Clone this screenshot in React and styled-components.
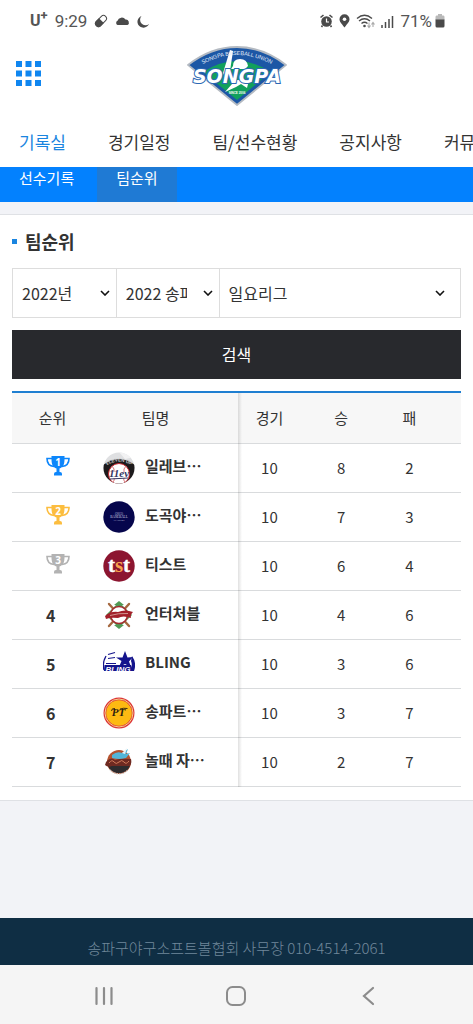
import React from 'react';
import styled, { createGlobalStyle } from 'styled-components';

const menu = [
  { id: 1, title: '기록실', active: true },
  { id: 2, title: '경기일정' },
  { id: 3, title: '팀/선수현황' },
  { id: 4, title: '공지사항' },
  { id: 5, title: '커뮤니티' },
];

const subMenu = [
  { id: 1, title: '선수기록' },
  { id: 2, title: '팀순위', active: true },
];

const filters = [
  { id: 'year', label: '연도', value: '2022년' },
  { id: 'season', label: '대회', value: '2022 송파구 리그' },
  { id: 'league', label: '리그', value: '일요리그', wide: true },
];

const teams = [
  { rank: 1, name: '일레브⋯', games: 10, win: 8, lose: 2, Logo: NineLogo },
  { rank: 2, name: '도곡야⋯', games: 10, win: 7, lose: 3, Logo: AcademyLogo },
  { rank: 3, name: '티스트', games: 10, win: 6, lose: 4, Logo: TstLogo },
  { rank: 4, name: '언터처블', games: 10, win: 4, lose: 6, Logo: UntouchableLogo },
  { rank: 5, name: 'BLING', games: 10, win: 3, lose: 6, Logo: BlingLogo },
  { rank: 6, name: '송파트⋯', games: 10, win: 3, lose: 7, Logo: PtLogo },
  { rank: 7, name: '놀때 자⋯', games: 10, win: 2, lose: 7, Logo: PlayLogo },
];

const trophyColors = { 1: '#0d86fb', 2: '#fcbd3f', 3: '#b3b3b3' };

function NineLogo() {
  return (
    <svg width="32" height="32" viewBox="0 0 32 32" aria-hidden="true">
      <defs>
        <clipPath id="nine"><circle cx="16" cy="16" r="15.5" /></clipPath>
        <path id="nineArc" d="M3 14 Q16 5 29 14" />
      </defs>
      <g clipPath="url(#nine)">
        <rect width="32" height="32" fill="#dfe0e2" />
        <path d="M16 0 L22 7 L32 5 V0 Z" fill="#f2f2f3" />
        <path d="M0 13 Q16 1 32 13 V25 L26 32 H6 L0 25 Z" fill="#1d1a1c" />
        <circle cx="16" cy="22" r="10.5" fill="#fff" stroke="#c8262e" />
        <path d="M9 14 Q12 17 11 20 M23 14 Q20 17 21 20 M10 30 Q12 28 11 26 M22 30 Q20 28 21 26" fill="none" stroke="#d8747a" />
      </g>
      <text fontFamily="Liberation Sans" fontSize="4.5" fontWeight="700" fill="#ccc">
        <textPath href="#nineArc" startOffset="50%" textAnchor="middle">ELEVEN UP</textPath>
      </text>
      <text x="16" y="25" textAnchor="middle" fontFamily="Liberation Serif" fontSize="11" fontStyle="italic" fontWeight="700" fill="#34365f">11ev</text>
      <path d="M7 27 L25 26" stroke="#34365f" />
    </svg>
  );
}

function AcademyLogo() {
  return (
    <svg width="32" height="32" viewBox="0 0 32 32" aria-hidden="true">
      <circle cx="16" cy="16" r="15.7" fill="#06064c" />
      <g fill="#d0d0e2" textAnchor="middle" fontFamily="Liberation Serif">
        <text x="16" y="13.5" fontSize="3">(2015)</text>
        <text x="16" y="17" fontSize="3.4">BASEBALL</text>
        <text x="16" y="20" fontSize="2.4">ACADEMY</text>
      </g>
    </svg>
  );
}

function TstLogo() {
  return (
    <svg width="32" height="32" viewBox="0 0 32 32" aria-hidden="true">
      <circle cx="16" cy="16" r="15.7" fill="#8c1530" />
      <g fontFamily="Liberation Serif" fontWeight="700" textAnchor="middle">
        <text x="8.5" y="22" fontSize="21" fill="#fff" stroke="#fff" strokeWidth=".4">t</text>
        <text x="16" y="22" fontSize="21" fill="#f8a34c">s</text>
        <text x="23.5" y="22" fontSize="21" fill="#fff" stroke="#fff" strokeWidth=".4">t</text>
      </g>
    </svg>
  );
}

function UntouchableLogo() {
  return (
    <svg width="32" height="32" viewBox="0 0 32 32" aria-hidden="true">
      <path d="M16 3 L29 16 L16 29 L3 16 Z" fill="#4f9a55" />
      <path d="M6 5 L26 27 M26 5 L6 27" stroke="#a5683f" strokeWidth="2.400" strokeLinecap="round" />
      <circle cx="16" cy="16" r="8.500" fill="#fff" stroke="#a52a30" strokeWidth="1.600" />
      <path d="M2 17 Q8 12 15 13 Q22 10 30 13 Q27 16 28 19 Q20 16 15 19 Q8 18 3 20 Z" fill="#a3202a" />
      <path d="M7 16.500 Q15 14 25 14.500" stroke="#dcb0a8" strokeWidth=".8" fill="none" />
      <path d="M11 6 H21 L16 2 Z M11 26 H21 L16 30 Z" fill="#4f9a55" />
    </svg>
  );
}

function BlingLogo() {
  return (
    <svg width="32" height="32" viewBox="0 0 32 32" aria-hidden="true">
      <path d="M3 8 Q-1 15 1 22" fill="none" stroke="#14148c" strokeWidth="1.300" />
      <path d="M5 6.500 L12 4.500 M5 10.500 L12 9.500 M3 15.500 H13" fill="none" stroke="#14148c" strokeWidth="1.200" />
      <path d="M22 3 L24.500 9.500 L30 9 L26 13.500 L28 19 L22 16 L16 19 L18.500 13 L13 9.500 L19.500 9.500 Z" fill="#14148c" />
      <path d="M29 8 Q34 15 31 23 H27 Q30 18 28 13 Z" fill="#14148c" />
      <path d="M1.500 17 H28 L30 23 H1 Z" fill="#14148c" />
      <text x="15" y="23.500" textAnchor="middle" fontFamily="Liberation Sans" fontSize="8" fontStyle="italic" fontWeight="700" fill="#fff">BLING</text>
    </svg>
  );
}

function PtLogo() {
  return (
    <svg width="32" height="32" viewBox="0 0 32 32" aria-hidden="true">
      <circle cx="16" cy="16" r="15.500" fill="#dd3538" />
      <circle cx="16" cy="16" r="14" fill="none" stroke="#f6cf8c" />
      <circle cx="16" cy="16" r="12.800" fill="#fdba12" />
      <text x="15.500" y="19" textAnchor="middle" fontFamily="Liberation Serif" fontSize="11" fontStyle="italic" fontWeight="700" fill="#2c2010">PT</text>
      <path d="M8.500 14 Q8.500 11 12 11.500 M17 12 Q20 10.800 24.500 11.500" fill="none" stroke="#2c2010" strokeWidth=".9" />
    </svg>
  );
}

function PlayLogo() {
  return (
    <svg width="32" height="32" viewBox="0 0 32 32" aria-hidden="true">
      <circle cx="16" cy="16" r="12" fill="#b5532f" />
      <path d="M5 20 A12 12 0 0 0 27 20 Z" fill="#2d2b2e" />
      <path d="M7 24 Q16 32 25 24" fill="none" stroke="#d6d3d0" strokeWidth="1.200" strokeDasharray="1.500 1" />
      <path d="M9 9 Q14 5 19 7 L25 3 L23 8 L27 7 L23 12 Q17 14 9 12 Z" fill="#52b5d8" />
      <path d="M19 7 L24 2 L22 8 Z" fill="#e9f3f5" />
      <path d="M3 16 Q8 10 12 14 Q18 12 28 13 Q29 17 27 20 H9 Q5 22 2 19 Z" fill="#6f2a22" />
      <path d="M6 17 Q9 13 11 16 T16 16 T21 16 T26 15" fill="none" stroke="#cf7a5a" />
    </svg>
  );
}

function Trophy({ rank }) {
  const color = trophyColors[rank];
  return (
    <svg width="24" height="20" viewBox="0 0 24 20" role="img" aria-label={`${rank}위`}>
      <path d="M6 2.500 H1 C1 7 3 10 8 10.500 M18 2.500 H23 C23 7 21 10 16 10.500" fill="none" stroke={color} strokeWidth="1.600" />
      <path d="M5.500 0 H18.500 V3 C18.500 8.500 17 11.500 13.500 12.500 V16 H10.500 V12.500 C7 11.500 5.500 8.500 5.500 3 Z" fill={color} />
      <path d="M8 19.500 V18 Q8 16 10 16 H14 Q16 16 16 18 V19.500 Z" fill={color} />
      <text x="12" y="10" textAnchor="middle" fontFamily="Open Sans" fontSize="10" fontWeight="700" fill="#fff">{rank}</text>
    </svg>
  );
}

function UnionLogo() {
  return (
    <svg width="100" height="60" viewBox="0 0 100 60" role="img" aria-label="SONGPA BASEBALL UNION">
      <defs>
        <path id="unionArc" d="M9 22 Q50 -4 91 22" />
      </defs>
      <path d="M1 19 Q24 1 50 1 Q76 1 99 19 L50 59 Z" fill="#1c57a5" stroke="#b4bac2" strokeWidth="1.800" />
      <path d="M16 26 Q50 4 84 26 L50 54 Z" fill="#12a05c" />
      <path d="M43 4 L46 5 L43 25 L38 31 L36 27 Z" fill="#fff" />
      <path d="M46 20 Q46 13 53 13 Q60 13 61 20 L58 23 H44 Z" fill="#fff" />
      <path d="M47 34 H62 L60 42 L54 38 L49 41 L38 46 L45 38 Z" fill="#fff" />
      <text fontFamily="Liberation Sans" fontSize="5.500" fill="#e6effa">
        <textPath href="#unionArc" startOffset="50%" textAnchor="middle">SONGPA BASEBALL UNION</textPath>
      </text>
      <text x="50" y="37" textAnchor="middle" fontFamily="DejaVu Sans" fontSize="19" fontStyle="italic" fontWeight="700" fill="#fff" stroke="#2c68b3" strokeWidth="2" paintOrder="stroke">SONGPA</text>
      <text x="50" y="48" textAnchor="middle" fontFamily="Liberation Sans" fontSize="3" fontWeight="700" fill="#fff">SINCE 2006</text>
    </svg>
  );
}

function StatusBar() {
  return (
    <ContainerStatus>
      <StatusGroup $wide>
        <Carrier>U<sup>+</sup></Carrier>
        <span>9:29</span>
        <svg width="14" height="14" viewBox="0 0 14 14" aria-hidden="true">
          <g transform="rotate(-45 7 7)">
            <rect x="0.500" y="4" width="13" height="6" rx="3" fill="#fff" stroke="#4a4a4a" />
            <path d="M7 4 V10 H3.500 A3 3 0 0 1 3.500 4 Z" fill="#4a4a4a" stroke="#4a4a4a" />
          </g>
        </svg>
        <svg width="15" height="10" viewBox="0 0 15 10" aria-hidden="true">
          <path d="M2.500 9 A2.300 2.300 0 0 1 2.500 4.800 A4.500 4.500 0 0 1 10.500 3.500 A3 3 0 0 1 12.500 9 Z" fill="#4a4a4a" />
        </svg>
        <svg width="13" height="13" viewBox="0 0 13 13" aria-hidden="true">
          <path d="M4.500 1 A6 6 0 1 0 12 9 A5.500 5.500 0 0 1 4.500 1 Z" fill="#4a4a4a" />
        </svg>
      </StatusGroup>
      <StatusGroup>
        <svg width="13" height="14" viewBox="0 0 13 14" aria-hidden="true">
          <path d="M0.500 3.500 L3.500 1 M12.500 3.500 L9.500 1 M2.500 11.500 L1.500 13 M10.500 11.500 L11.500 13" stroke="#4a4a4a" strokeWidth="1.600" />
          <circle cx="6.500" cy="7.500" r="5.300" fill="#4a4a4a" />
          <path d="M6.500 4.500 V8 H9" fill="none" stroke="#fff" strokeWidth="1.200" />
        </svg>
        <svg width="11" height="14" viewBox="0 0 11 14" aria-hidden="true">
          <path d="M5.500 13.500 C2 9 .5 7.500 .5 5.300 A5 5 0 0 1 10.500 5.300 C10.500 7.500 9 9 5.500 13.500 Z" fill="#4a4a4a" />
          <circle cx="5.500" cy="5.300" r="1.800" fill="#fff" />
        </svg>
        <svg width="19" height="15" viewBox="0 0 19 15" aria-hidden="true">
          <path d="M1 4.500 Q8.500 -2 16 4.500 M3 7 Q8.500 2.500 14 7 M5.500 9.500 Q8.500 7 11.500 9.500" fill="none" stroke="#4a4a4a" strokeWidth="1.400" />
          <circle cx="8.500" cy="12" r="1.300" fill="#4a4a4a" />
          <path d="M13 8.500 V13 M11.500 11.500 L13 13.500 L14.500 11.500 M17 13 V8.500 M15.500 10.500 L17 8.500 L18.500 10.500" fill="none" stroke="#aaa" strokeWidth="1.100" />
        </svg>
        <svg width="13" height="13" viewBox="0 0 13 13" aria-hidden="true">
          <path d="M1 10 V13 M4.500 7 V13 M8 4 V13 M11.500 1 V13" stroke="#4a4a4a" strokeWidth="1.500" />
        </svg>
        <Battery>
          <span>71%</span>
          <svg width="10" height="14" viewBox="0 0 10 14" aria-hidden="true">
            <path d="M3 0 H7 V1.500 H8.500 Q9.500 1.500 9.500 3 V6 H.5 V3 Q.5 1.500 1.500 1.500 H3 Z" fill="#b9b9b9" />
            <path d="M.5 5.500 H9.500 V12 Q9.500 13.500 8 13.500 H2 Q.5 13.500 .5 12 Z" fill="#4a4a4a" />
          </svg>
        </Battery>
      </StatusGroup>
    </ContainerStatus>
  );
}

function Header() {
  return (
    <header>
      <TopBar>
        <MenuButton type="button" aria-label="전체 메뉴">
          <svg width="25" height="25" viewBox="0 0 25 25" aria-hidden="true">
            {[0, 9.5, 19].map((y) =>
              [0, 9.5, 19].map((x) => (
                <rect key={`${x}-${y}`} x={x} y={y} width="6" height="6" fill="#0f86f0" />
              ))
            )}
          </svg>
        </MenuButton>
        <LogoLink href="#home"><UnionLogo /></LogoLink>
      </TopBar>
      <MainNav>
        {menu.map(({ id, title, active }) => (
          <NavLink key={id} href="#menu" $active={active}>{title}</NavLink>
        ))}
      </MainNav>
      <SubNav>
        {subMenu.map(({ id, title, active }) => (
          <SubLink key={id} href="#records" $active={active}>{title}</SubLink>
        ))}
      </SubNav>
    </header>
  );
}

function SearchForm() {
  return (
    <form onSubmit={(e) => e.preventDefault()}>
      <FilterRow>
        {filters.map(({ id, label, value, wide }) => (
          <Filter key={id} $wide={wide}>
            <select id={id} aria-label={label}>
              <option>{value}</option>
            </select>
            <svg width="10" height="6" viewBox="0 0 10 6" aria-hidden="true">
              <path d="M1 1 L5 5 L9 1" fill="none" stroke="#111" strokeWidth="1.600" />
            </svg>
          </Filter>
        ))}
      </FilterRow>
      <SearchButton type="submit">검색</SearchButton>
    </form>
  );
}

function RankingTable() {
  return (
    <Table>
      <thead>
        <tr>
          <RankHead scope="col">순위</RankHead>
          <TeamHead scope="col">팀명</TeamHead>
          <GamesHead scope="col">경기</GamesHead>
          <WinHead scope="col">승</WinHead>
          <LoseHead scope="col">패</LoseHead>
        </tr>
      </thead>
      <tbody>
        {teams.map(({ rank, name, games, win, lose, Logo }) => (
          <tr key={rank}>
            <RankCell>{rank <= 3 ? <Trophy rank={rank} /> : rank}</RankCell>
            <TeamCell>
              <Team>
                <Logo />
                <TeamName>{name}</TeamName>
              </Team>
            </TeamCell>
            <Cell>{games}</Cell>
            <Cell>{win}</Cell>
            <LoseCell>{lose}</LoseCell>
          </tr>
        ))}
      </tbody>
    </Table>
  );
}

function SystemNav() {
  return (
    <ContainerSystem>
      <SystemButton type="button" aria-label="최근 앱">
        <svg width="20" height="20" viewBox="0 0 20 20" aria-hidden="true">
          <path d="M2.500 2 V18 M10 2 V18 M17.500 2 V18" stroke="#8c8c8c" strokeWidth="2.200" strokeLinecap="round" />
        </svg>
      </SystemButton>
      <SystemButton type="button" aria-label="홈">
        <svg width="20" height="20" viewBox="0 0 20 20" aria-hidden="true">
          <rect x="1" y="1" width="18" height="18" rx="5.500" fill="none" stroke="#8c8c8c" strokeWidth="2" />
        </svg>
      </SystemButton>
      <SystemButton type="button" aria-label="뒤로">
        <svg width="20" height="20" viewBox="0 0 20 20" aria-hidden="true">
          <path d="M14 2 L5 10 L14 18" fill="none" stroke="#8c8c8c" strokeWidth="2.200" strokeLinecap="round" />
        </svg>
      </SystemButton>
    </ContainerSystem>
  );
}

const App = () => {
  return (
    <Page>
      <GlobalStyle />
      <StatusBar />
      <Header />
      <Main>
        <Card>
          <Title>팀순위</Title>
          <SearchForm />
          <RankingTable />
        </Card>
      </Main>
      <Footer>송파구야구소프트볼협회 사무장 010-4514-2061</Footer>
      <SystemNav />
    </Page>
  );
};

export default App;

const GlobalStyle = createGlobalStyle`
  * {
    box-sizing: border-box;
  }

  body {
    margin: 0;
    font-family: "Noto Sans CJK KR", "Noto Sans", sans-serif;
    color: #333;
    background: #fff;
  }

  button, select {
    font-family: inherit;
    color: inherit;
  }

  a {
    text-decoration: none;
    color: inherit;
  }

  svg {
    display: block;
    flex-shrink: 0;
  }
`;

const Page = styled.div`
  display: flex;
  flex-direction: column;
  min-height: 100vh;
  overflow-x: hidden;
`;

const ContainerStatus = styled.div`
  display: flex;
  justify-content: space-between;
  align-items: center;
  height: 42px;
  padding: 0 28px 0 30px;
  font-family: Roboto, sans-serif;
  font-size: 17px;
  color: #555;
`;

const StatusGroup = styled.div`
  display: flex;
  align-items: center;
  column-gap: ${({ $wide }) => ($wide ? '7px' : '6px')};
`;

const Carrier = styled.strong`
  font-size: 16px;
  line-height: 16px;

  sup {
    font-size: 13px;
    line-height: 0;
  }
`;

const Battery = styled.div`
  display: flex;
  align-items: center;
  column-gap: 3px;
`;

const TopBar = styled.div`
  display: grid;
  grid-template-columns: 1fr auto 1fr;
  align-items: center;
  height: 68px;
  padding: 0 16px;
`;

const MenuButton = styled.button`
  justify-self: start;
  border: 0;
  padding: 0 0 6px;
  background: none;
`;

const LogoLink = styled.a`
  display: block;
`;

const MainNav = styled.nav`
  display: flex;
  column-gap: 42px;
  height: 57px;
  padding: 7px 19px 0;
  overflow: hidden;
`;

const NavLink = styled.a`
  flex-shrink: 0;
  font-size: 17px;
  line-height: 50px;
  color: ${({ $active }) => ($active ? '#1a85e0' : '#333')};
`;

const SubNav = styled.nav`
  display: flex;
  column-gap: 4px;
  background: #0381fe;
`;

const SubLink = styled.a`
  padding: 0 19px 13px;
  font-size: 15px;
  line-height: 22px;
  color: #fff;
  background: ${({ $active }) => ($active ? '#1f7ad4' : 'none')};
`;

const Main = styled.main`
  flex: 1;
  padding: 12px 0;
  background: #f2f3f7;
`;

const Card = styled.section`
  padding: 13px 12px;
  background: #fff;
  border-top: 1px solid #dfe1e5;
  border-bottom: 1px solid #dfe1e5;
`;

const Title = styled.h2`
  display: flex;
  align-items: center;
  column-gap: 8px;
  margin: 0 0 13px;
  font-size: 18px;
  line-height: 27px;
  font-weight: 700;

  &::before {
    content: '';
    width: 5px;
    height: 5px;
    background: #1a85e0;
  }
`;

const FilterRow = styled.div`
  display: flex;
  border: 1px solid #ddd;
  margin-bottom: 12px;
`;

const Filter = styled.div`
  display: grid;
  flex: ${({ $wide }) => ($wide ? '1' : '0 0 23%')};
  align-items: center;

  & + & {
    border-left: 1px solid #ddd;
  }

  select,
  svg {
    grid-area: 1 / 1;
  }

  select {
    appearance: none;
    width: 100%;
    min-width: 0;
    height: 48px;
    border: 0;
    padding: 0 32px 0 9px;
    background: none;
    font-size: 16px;
  }

  svg {
    justify-self: end;
    margin-right: ${({ $wide }) => ($wide ? '15px' : '6px')};
    pointer-events: none;
  }
`;

const SearchButton = styled.button`
  display: block;
  width: 100%;
  height: 49px;
  margin-bottom: 12px;
  border: 0;
  padding: 0 0 2px;
  background: #28292d;
  color: #fff;
  font-size: 16px;
`;

const Table = styled.table`
  width: 100%;
  table-layout: fixed;
  border-collapse: separate;
  border-spacing: 0;
  border-top: 2px solid #1f7fd1;
  font-size: 15px;
  line-height: 22px;
`;

const Cell = styled.td`
  height: 49px;
  padding: 0;
  border-bottom: 1px solid #d9dbdd;
  text-align: center;
`;

const HeadCell = styled.th`
  height: 51px;
  padding: 0;
  border-bottom: 1px solid #d9dbdd;
  background: #f7f7f7;
  font-weight: 400;
`;

const RankHead = styled(HeadCell)`
  width: 81px;
`;

const stickyShadow = `
  position: relative;

  &::after {
    content: '';
    position: absolute;
    top: 0;
    bottom: -1px;
    right: -4px;
    width: 4px;
    background: linear-gradient(to right, rgba(0, 0, 0, 0.12), rgba(0, 0, 0, 0));
  }
`;

const TeamHead = styled(HeadCell)`
  ${stickyShadow}
  width: 145px;
  padding-right: 20px;
`;

const GamesHead = styled(HeadCell)`
  width: 14%;
`;

const WinHead = styled(HeadCell)`
  width: 18%;
`;

const LoseHead = styled(HeadCell)`
  padding-right: 24px;
`;

const RankCell = styled(Cell)`
  padding-left: 34px;
  text-align: left;
  font-size: 16px;
  font-weight: 700;

  svg {
    margin-bottom: 4px;
  }
`;

const TeamCell = styled(Cell)`
  ${stickyShadow}
  text-align: left;
`;

const LoseCell = styled(Cell)`
  padding-right: 24px;
`;

const Team = styled.div`
  display: flex;
  align-items: center;
  column-gap: 10px;
  padding-left: 10px;
`;

const TeamName = styled.strong`
  padding-bottom: 4px;
  white-space: nowrap;
`;

const Footer = styled.footer`
  height: 47px;
  padding-top: 19px;
  background: #0f2e44;
  color: #71889b;
  font-size: 15px;
  font-weight: 300;
  line-height: 22px;
  text-align: center;
`;

const ContainerSystem = styled.nav`
  display: grid;
  grid-template-columns: repeat(3, 1fr);
  height: 59px;
  padding: 2px 8% 0;
  background: #f5f5f5;
`;

const SystemButton = styled.button`
  display: flex;
  justify-content: center;
  align-items: center;
  border: 0;
  padding: 0;
  background: none;
`;
